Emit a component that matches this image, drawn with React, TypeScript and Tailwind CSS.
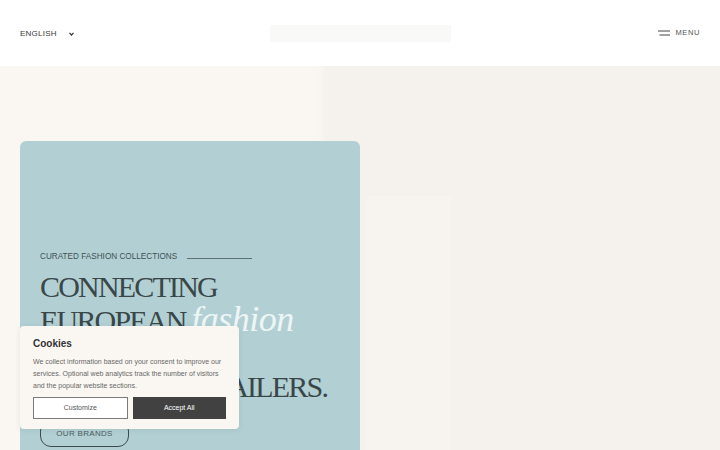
import React from "react";

const sans = { fontFamily: '"Liberation Sans", Arial, sans-serif' };
const serif = { fontFamily: '"Liberation Serif", "Times New Roman", serif' };

function Header() {
  return (
    <header className="h-[66px] bg-white grid grid-cols-[1fr_auto_1fr] items-center px-5">
      <button className="justify-self-start flex items-center gap-[12px] text-[8px] tracking-[0.25px] text-[#3a3a3a] mt-[1px]" style={sans}>
        <span>ENGLISH</span>
        <svg width="5" height="4" viewBox="0 0 5 4" className="mt-[1px]">
          <path d="M0.5 0.8 L2.5 3 L4.5 0.8" fill="none" stroke="#333" strokeWidth="1.2" />
        </svg>
      </button>
      <div className="w-[181px] h-[17px] bg-[#f9f9f7]" />
      <button className="justify-self-end flex items-center gap-[6px] text-[7.5px] tracking-[0.6px] text-[#555]" style={sans}>
        <svg width="12" height="6" viewBox="0 0 12 6">
          <line x1="0" y1="1" x2="12" y2="1" stroke="#444" strokeWidth="1" />
          <line x1="1.5" y1="5" x2="12" y2="5" stroke="#444" strokeWidth="1" />
        </svg>
        <span>MENU</span>
      </button>
    </header>
  );
}

function Hero() {
  return (
    <div className="relative h-[384px] overflow-hidden bg-[linear-gradient(to_right,#faf7f3_318px,#f5f1ed_326px)]">
      <div className="absolute left-[367px] top-[130px] w-[84px] h-[260px] bg-[#f7f4f0]" />
      <div className="relative ml-5 mt-[75px] w-[340px] h-[320px] rounded-[6px] bg-[#b2d0d4] pl-5 pt-[110px]">
        <div className="flex items-center gap-[10px]">
          <span className="text-[8.2px] tracking-[0px] text-[#3f5054]" style={sans}>
            CURATED FASHION COLLECTIONS
          </span>
          <span className="block w-[65px] h-px bg-[#5c7276] mt-[3px]" />
        </div>
        <h1 className="mt-[7px] text-[30px] leading-[33px] tracking-[-1.8px] text-[#3a4749] font-normal" style={serif}>
          <span className="block">CONNECTING</span>
          <span className="block">
            EUROPEAN{" "}
            <em className="text-[36px] tracking-[-0.5px] text-[#eef5f5] italic">fashion</em>
          </span>
          <span className="block">BRANDS WITH</span>
          <span className="block [word-spacing:12px]">LEADING RETAILERS.</span>
        </h1>
        <button
          className="mt-[17px] w-[89px] h-[27px] rounded-[11px] border border-[#3d4b4e] text-[8px] tracking-[0.3px] text-[#4a5b5f]"
          style={sans}
        >
          OUR BRANDS
        </button>
      </div>
    </div>
  );
}

function CookieBanner() {
  return (
    <div
      className="absolute left-5 top-[326px] w-[219px] h-[103px] rounded-[4px] bg-[#faf7f3] shadow-[0_1px_6px_rgba(0,0,0,0.08)] px-[13px] pt-[10px]"
      style={sans}
    >
      <div className="text-[10px] font-bold text-[#333]">Cookies</div>
      <p className="mt-[5px] text-[7px] leading-[12px] text-[#676767]">
        We collect information based on your consent to improve our services. Optional web analytics track the number of visitors and the popular website sections.
      </p>
      <div className="mt-[5px] flex gap-[5px]">
        <button className="w-[95px] h-[22px] bg-white border-[1.5px] border-[#7a7a7a] text-[7px] text-[#555]">
          Customize
        </button>
        <button className="w-[94px] h-[22px] bg-[#414141] text-[7px] text-white">Accept All</button>
      </div>
    </div>
  );
}

export default function App() {
  return (
    <div className="relative w-[720px] h-[450px] overflow-hidden bg-white">
      <Header />
      <Hero />
      <CookieBanner />
    </div>
  );
}
